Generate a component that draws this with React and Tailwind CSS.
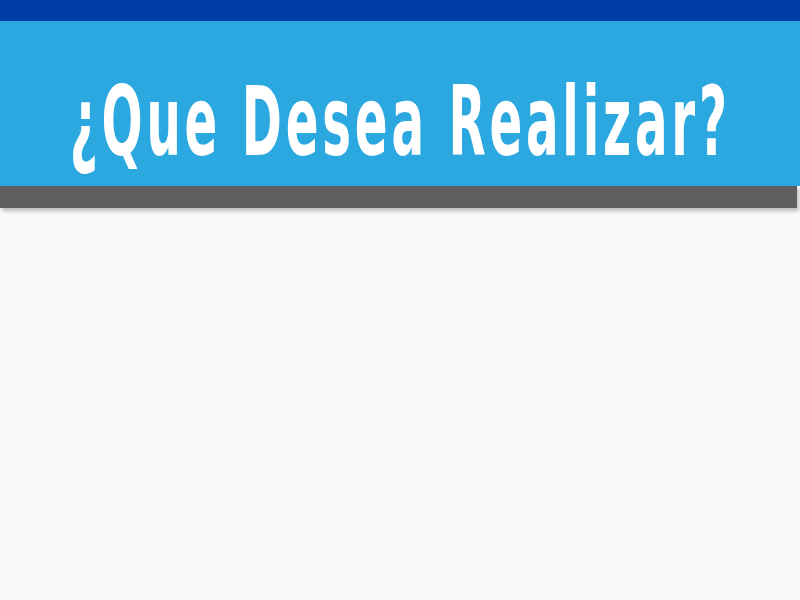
import React from 'react';

export default function App() {
  return (
    <div className="min-h-[600px] w-full bg-[#f9f9f9]">
      {/* Top strip */}
      <div className="h-[21px] bg-[#003ea6]" />

      {/* Title band */}
      <header className="h-[165px] bg-[#2ca8e1] flex items-center justify-center">
        <h1
          className="text-white text-[96px] leading-none tracking-[0.07em] scale-x-[0.56] whitespace-nowrap pt-[36px]"
          style={{ fontFamily: '"DejaVu Sans Condensed", "DejaVu Sans", sans-serif', fontWeight: 700 }}
        >
          ¿Que Desea Realizar?
        </h1>
      </header>

      {/* Gray divider */}
      <div className="h-[22px] w-[797px] bg-[#5f5f5f] shadow-[2px_3px_4px_rgba(0,0,0,0.25)]" />
    </div>
  );
}
